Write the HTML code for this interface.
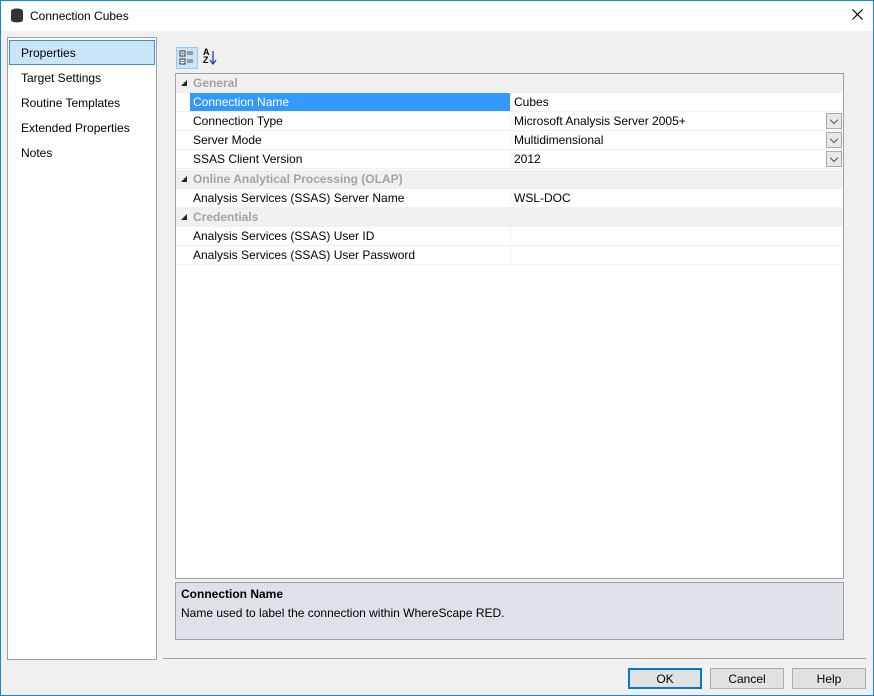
<!DOCTYPE html>
<html><head><style>
*{box-sizing:border-box;margin:0;padding:0}
body{width:874px;height:696px;overflow:hidden;font-family:"Liberation Sans",sans-serif;font-size:12px;color:#000;background:#f0f0f0;position:relative}
.win{position:absolute;left:0;top:0;width:874px;height:696px;border:1px solid #1883d7}
.title{position:absolute;left:1px;top:1px;width:872px;height:30px;background:#fff}
.abs{position:absolute}
.row{position:absolute;left:176px;width:667px;height:19px;border-bottom:1px solid #f0f0f0;white-space:nowrap}
.row .n{position:absolute;left:14px;top:0;width:321px;height:18px;background:#fff;padding:2px 0 0 3px;border-right:1px solid #f0f0f0}
.row .v{position:absolute;left:335px;top:0;right:0;height:18px;background:#fff;padding:2px 0 0 3px}
.cat{position:absolute;left:176px;width:667px;height:19px;background:#f0f0f0;color:#a3a3a3;font-weight:bold;padding:2px 0 0 17px}
.cat:before{content:"";position:absolute;left:5px;top:6px;border-left:6px solid transparent;border-bottom:6px solid #222}
.dd{position:absolute;right:1px;top:1px;width:16px;height:16px;border:1px solid #a8a8a8;background:#e8e8e8}
.dd:after{content:"";position:absolute;left:4px;top:3px;width:5px;height:5px;border-right:1px solid #555;border-bottom:1px solid #555;transform:rotate(45deg)}
.btn{position:absolute;top:668px;width:74px;height:21px;border:1px solid #adadad;background:#e1e1e1;text-align:center;padding-top:3px}
.li{position:absolute;left:21px}
</style></head><body>
<div class="win"></div>
<div class="title"></div>
<svg class="abs" style="left:10px;top:8px" width="14" height="15"><ellipse cx="7" cy="3" rx="6" ry="2.5" fill="#333"/><rect x="1" y="3" width="12" height="9" fill="#333"/><ellipse cx="7" cy="12" rx="6" ry="2.5" fill="#333"/></svg>
<div class="abs" style="left:30px;top:9px;font-size:12px">Connection Cubes</div>
<svg class="abs" style="left:852px;top:9px" width="11" height="11"><path d="M0.5 0.5L10.5 10.5M10.5 0.5L0.5 10.5" stroke="#000" stroke-width="1.2"/></svg>

<div class="abs" style="left:7px;top:37px;width:150px;height:623px;background:#fff;border:1px solid #a0a0a0"></div>
<div class="abs" style="left:9px;top:40px;width:146px;height:25px;background:#cce4f7;border:1px solid #3c8edb"></div>
<div class="li" style="top:46px">Properties</div>
<div class="li" style="top:71px">Target Settings</div>
<div class="li" style="top:96px">Routine Templates</div>
<div class="li" style="top:121px">Extended Properties</div>
<div class="li" style="top:146px">Notes</div>

<div class="abs" style="left:176px;top:47px;width:22px;height:22px;background:#cce4f7;border:1px solid #99c9ef"></div>
<svg class="abs" style="left:179px;top:50px" width="16" height="16"><rect x="1" y="1" width="5" height="5" fill="#fff" stroke="#333"/><rect x="1" y="9" width="5" height="5" fill="#fff" stroke="#333"/><path d="M8 2h6M8 4h6M8 10h6M8 12h6M2.5 3.5h2M3.5 2.5v2M2.5 11.5h2" stroke="#555"/></svg>
<div class="abs" style="left:203px;top:48px;font-size:9px;line-height:8px;font-weight:bold">A<br>Z</div>
<svg class="abs" style="left:209px;top:50px" width="8" height="16"><path d="M4 1v12M1 10l3 4 3-4" stroke="#1c3fa8" fill="none" stroke-width="1.3"/></svg>

<div class="abs" style="left:175px;top:73px;width:669px;height:506px;background:#fff;border:1px solid #a0a0a0"></div>
<div class="cat" style="top:74px">General</div>
<div class="row" style="top:93px"><div class="n" style="background:#3399ff;color:#fff">Connection Name</div><div class="v">Cubes</div></div>
<div class="row" style="top:112px"><div class="n">Connection Type</div><div class="v">Microsoft Analysis Server 2005+<span class="dd"></span></div></div>
<div class="row" style="top:131px"><div class="n">Server Mode</div><div class="v">Multidimensional<span class="dd"></span></div></div>
<div class="row" style="top:150px"><div class="n">SSAS Client Version</div><div class="v">2012<span class="dd"></span></div></div>
<div class="cat" style="top:170px">Online Analytical Processing (OLAP)</div>
<div class="row" style="top:189px"><div class="n">Analysis Services (SSAS) Server Name</div><div class="v">WSL-DOC</div></div>
<div class="cat" style="top:208px">Credentials</div>
<div class="row" style="top:227px"><div class="n">Analysis Services (SSAS) User ID</div><div class="v"></div></div>
<div class="row" style="top:246px"><div class="n">Analysis Services (SSAS) User Password</div><div class="v"></div></div>

<div class="abs" style="left:175px;top:582px;width:669px;height:58px;background:#dde1e8;border:1px solid #a0a0a0"></div>
<div class="abs" style="left:181px;top:587px;font-weight:bold">Connection Name</div>
<div class="abs" style="left:181px;top:606px">Name used to label the connection within WhereScape RED.</div>

<div class="abs" style="left:163px;top:658px;width:703px;height:1px;background:#a0a0a0"></div>
<div class="btn" style="left:628px;border:2px solid #0078d7;padding-top:2px">OK</div>
<div class="btn" style="left:710px">Cancel</div>
<div class="btn" style="left:792px">Help</div>
</body></html>
